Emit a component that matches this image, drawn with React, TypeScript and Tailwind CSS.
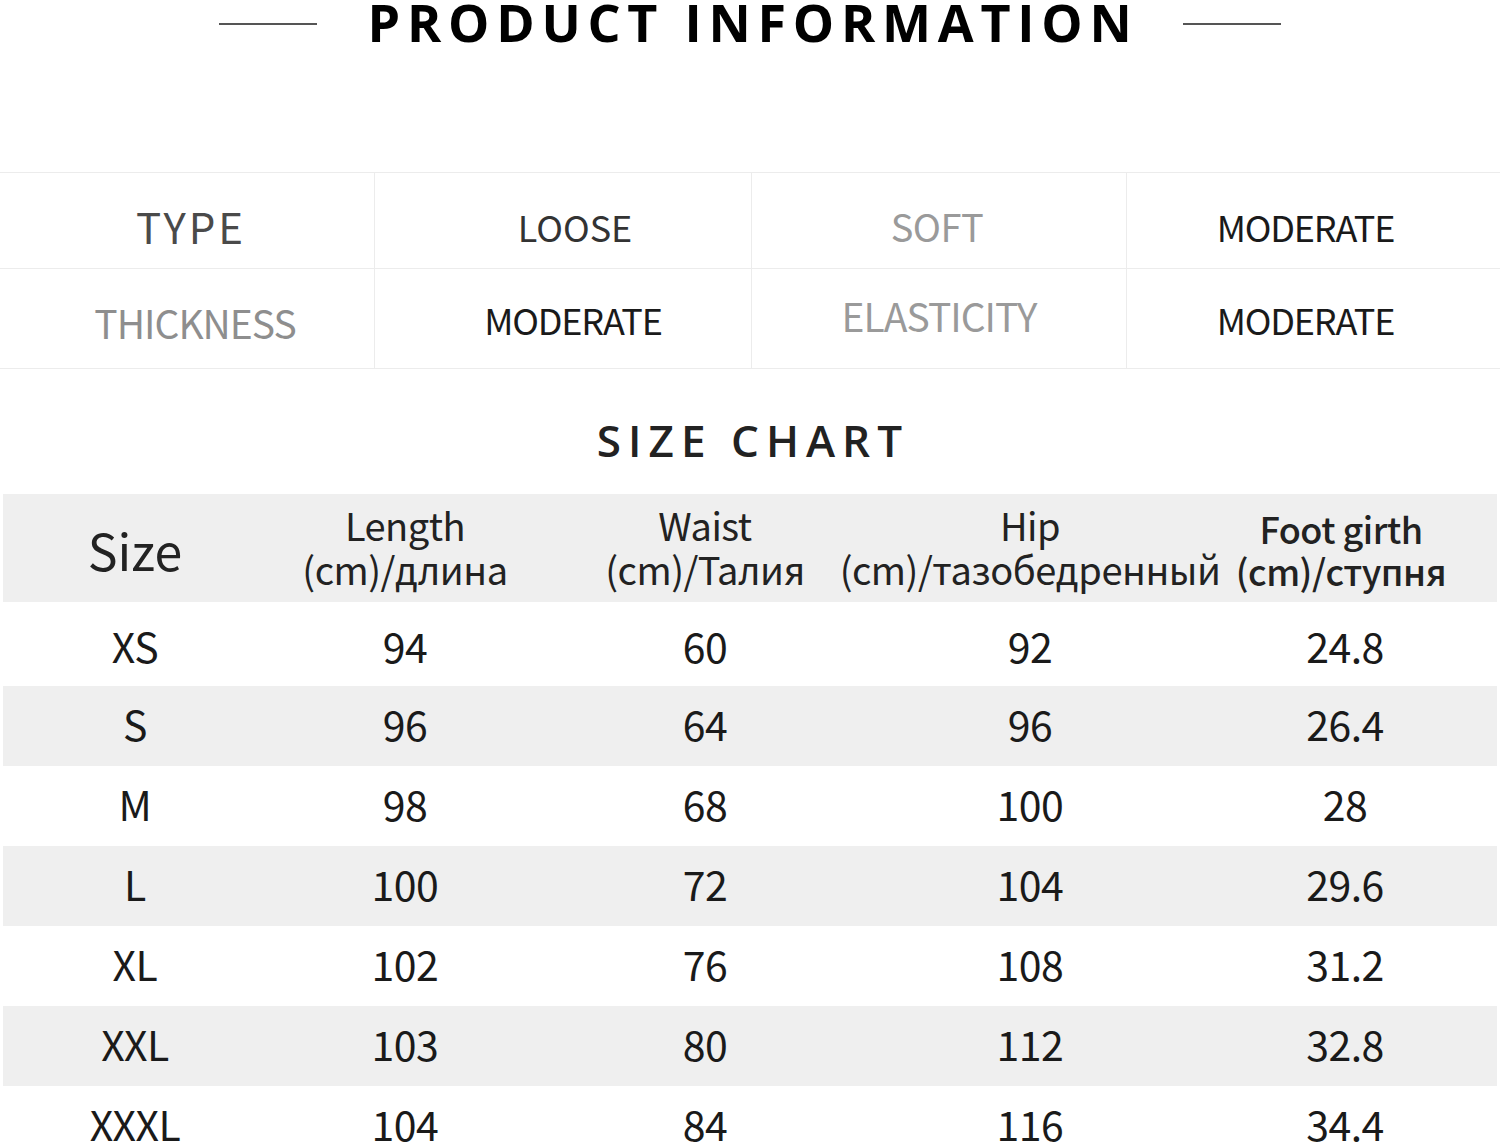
const chartFont = { fontFamily: '"Noto Sans CJK SC", "Noto Sans", sans-serif' };

const infoCells = [
  { text: "TYPE", cls: "text-[42px] tracking-[3px] text-[#4a4a4a] pt-[10px] pl-[8px]" },
  { text: "LOOSE", cls: "text-[36px] tracking-[0px] text-[#333] pt-[10px] pl-[24px]" },
  { text: "SOFT", cls: "text-[38px] tracking-[-0.5px] text-[#9a9a9a] pt-[10px] pr-[4px]" },
  { text: "MODERATE", cls: "text-[36px] tracking-[-1.2px] text-[#1a1a1a] pt-[10px] pr-[16px]" },
  { text: "THICKNESS", cls: "text-[39px] tracking-[-1px] text-[#8e8e8e] pt-[8px] pl-[16px]" },
  { text: "MODERATE", cls: "text-[36px] tracking-[-1.2px] text-[#1a1a1a] pl-[20px]" },
  { text: "ELASTICITY", cls: "text-[39px] tracking-[-1px] text-[#9a9a9a] pb-[6px]" },
  { text: "MODERATE", cls: "text-[36px] tracking-[-1.2px] text-[#1a1a1a] pr-[16px]" },
];

const headers = [
  { l1: "Length", l2: "(cm)/длина" },
  { l1: "Waist", l2: "(cm)/Талия" },
  { l1: "Hip", l2: "(cm)/тазобедренный" },
];

const rows = [
  ["XS", "94", "60", "92", "24.8"],
  ["S", "96", "64", "96", "26.4"],
  ["M", "98", "68", "100", "28"],
  ["L", "100", "72", "104", "29.6"],
  ["XL", "102", "76", "108", "31.2"],
  ["XXL", "103", "80", "112", "32.8"],
  ["XXXL", "104", "84", "116", "34.4"],
];

const cols = "grid grid-cols-[264px_276px_324px_326px_1fr]";

export default function App() {
  return (
    <div className="w-[1500px] h-[1143px] overflow-hidden bg-white">
      {/* Title */}
      <div className="flex items-center justify-center gap-[44px] h-[48px]">
        <div className="w-[98px] h-[2px] bg-[#555]"></div>
        <div
          className="text-[52px] font-bold tracking-[0.13em] leading-none text-black -mt-[4px] pl-[6px]"
          style={{ fontFamily: '"Open Sans", sans-serif' }}
        >
          PRODUCT INFORMATION
        </div>
        <div className="w-[98px] h-[2px] bg-[#555]"></div>
      </div>

      {/* Product info */}
      <div className="mt-[124px] grid grid-cols-[375px_377px_375px_1fr] border-t border-[#ececec]" style={chartFont}>
        {infoCells.map((c, i) => (
          <div
            key={i}
            className={`flex items-center justify-center border-b border-[#ececec] ${i % 4 !== 3 ? "border-r" : ""} ${i < 4 ? "h-[96px]" : "h-[100px]"}`}
          >
            <span className={`leading-none ${c.cls}`}>{c.text}</span>
          </div>
        ))}
      </div>

      {/* Size chart title */}
      <div
        className="h-[125px] flex items-center justify-center text-[44px] font-semibold tracking-[0.16em] text-[#222] pl-[6px] pt-[16px]"
        style={{ fontFamily: '"Open Sans", sans-serif' }}
      >
        SIZE CHART
      </div>

      {/* Size chart */}
      <div className="mx-[3px]" style={chartFont}>
        <div className={`${cols} h-[108px] bg-[#efefef] text-[#222]`}>
          <div className="flex items-center justify-center text-[50px] pt-[2px]">Size</div>
          {headers.map((h) => (
            <div
              key={h.l1}
              className="flex flex-col items-center justify-center text-[38px] tracking-[-0.5px] leading-[44px] whitespace-nowrap pb-[2px]"
            >
              <span>{h.l1}</span>
              <span>{h.l2}</span>
            </div>
          ))}
          <div className="flex flex-col items-center justify-center text-[36px] leading-[42px] font-medium tracking-[-0.5px] whitespace-nowrap pt-[2px] pr-[8px]">
            <span>Foot girth</span>
            <span>(cm)/ступня</span>
          </div>
        </div>

        {rows.map((r, i) => (
          <div
            key={r[0]}
            className={`${cols} ${i === 0 ? "h-[84px] pt-[3px]" : "h-[80px]"} ${i % 2 === 1 ? "bg-[#efefef]" : "bg-white"} text-[41px] text-[#1a1a1a]`}
          >
            {r.map((v, j) => (
              <div key={j} className={`flex items-center justify-center tracking-[-0.5px] ${i > 0 ? "pb-[4px]" : ""}`}>
                {v}
              </div>
            ))}
          </div>
        ))}
      </div>
    </div>
  );
}
